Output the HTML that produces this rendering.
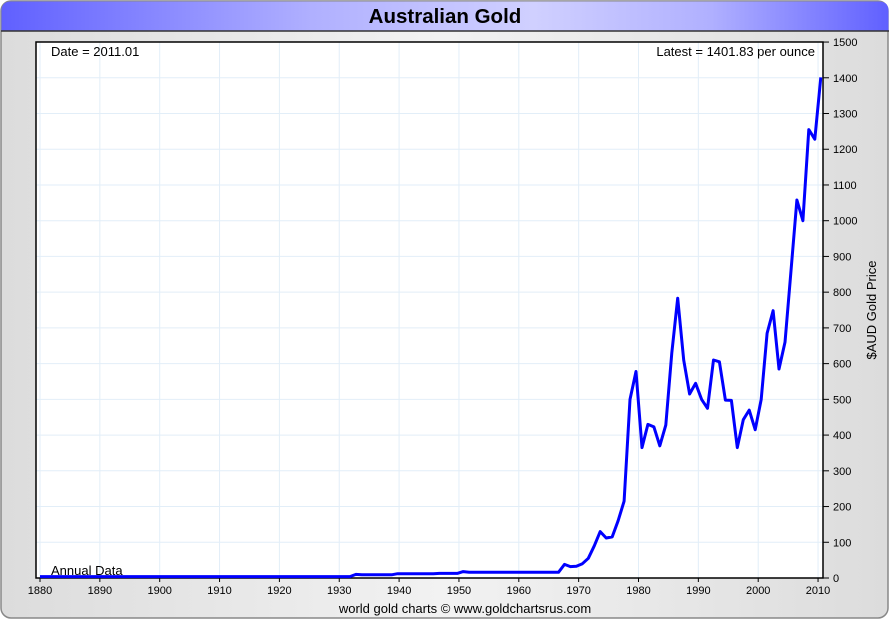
<!DOCTYPE html>
<html><head><meta charset="utf-8"><style>
html,body{margin:0;padding:0;background:#fff;}
body{width:890px;height:620px;overflow:hidden;font-family:"Liberation Sans",sans-serif;}
</style></head><body>
<svg id="s" width="890" height="620" xmlns="http://www.w3.org/2000/svg" font-family="Liberation Sans, sans-serif">
<defs>
<linearGradient id="hd" x1="0" x2="1" y1="0" y2="0">
<stop offset="0" stop-color="#6060ff"/><stop offset="0.35" stop-color="#b0b0ff"/><stop offset="0.6" stop-color="#d0d0ff"/><stop offset="0.8" stop-color="#b0b0ff"/><stop offset="1" stop-color="#6060ff"/>
</linearGradient>
<linearGradient id="bg" x1="0" x2="1" y1="0" y2="0">
<stop offset="0" stop-color="#dcdcdc"/><stop offset="0.5" stop-color="#f2f2f2"/><stop offset="1" stop-color="#dcdcdc"/>
</linearGradient>
</defs>
<rect x="1" y="1" width="887" height="617" rx="10" fill="url(#bg)" stroke="#888" stroke-width="1.5"/>
<path d="M1.5,31 L1.5,11 Q1.5,1.5 11,1.5 L879,1.5 Q888.5,1.5 888.5,11 L888.5,31 Z" fill="url(#hd)"/>
<line x1="1" y1="31" x2="889" y2="31" stroke="#333" stroke-width="1.5"/>
<text x="445" y="23" text-anchor="middle" font-size="20.5" font-weight="bold" fill="#000">Australian Gold</text>
<rect x="36" y="42" width="787" height="536" fill="#fff"/>
<g id="grid"></g>
<rect x="36" y="42" width="787" height="536" fill="none" stroke="#000" stroke-width="1.5"/>
<g id="ax" font-size="11" fill="#000"></g>
<text x="51" y="56" font-size="13">Date = 2011.01</text>
<text x="815" y="56" font-size="13" text-anchor="end">Latest = 1401.83 per ounce</text>
<text x="51" y="575" font-size="13">Annual Data</text>
<text x="876" y="310" font-size="13" text-anchor="middle" transform="rotate(-90 876 310)">$AUD Gold Price</text>
<text x="465" y="613" font-size="13" text-anchor="middle">world gold charts © www.goldchartsrus.com</text>
<polyline id="ln" fill="none" stroke="#0000ff" stroke-width="3" stroke-linejoin="round"/>
</svg>
<script>
var NS="http://www.w3.org/2000/svg";
function X(y){return 40+(y-1880)*5.985;}
function XD(y){return 40+(y-1880)*5.96;}
function Y(v){return 578-v*0.3573;}
function el(t,a,p,txt){var e=document.createElementNS(NS,t);for(var k in a)e.setAttribute(k,a[k]);if(txt)e.textContent=txt;p.appendChild(e);return e;}
var g=document.getElementById('grid'),ax=document.getElementById('ax');
for(var y=1880;y<=2010;y+=10){var x=X(y);el('line',{x1:x,y1:42,x2:x,y2:578,stroke:'#e2eef8','stroke-width':1},g);
el('line',{x1:x,y1:578,x2:x,y2:582,stroke:'#000'},ax);el('text',{x:x,y:594,'text-anchor':'middle'},ax,''+y);}
for(var v=0;v<=1500;v+=100){var yy=Y(v);el('line',{x1:36,y1:yy,x2:823,y2:yy,stroke:'#e2eef8','stroke-width':1},g);
el('line',{x1:823,y1:yy,x2:829,y2:yy,stroke:'#000'},ax);el('text',{x:833,y:yy+4},ax,''+v);}
var d={1932:4,1933:10,1934:9,1939:9,1940:12,1946:12,1947:13,1950:13,1951:18,1952:16,1960:16,1967:16,1968:38,1969:32,1970:33,1971:40,1972:55,1973:90,1974:130,1975:112,1976:115,1977:160,1978:215,1979:500,1980:578,1981:365,1982:430,1983:423,1984:370,1985:428,1986:630,1987:783,1988:610,1989:515,1990:545,1991:500,1992:475,1993:610,1994:605,1995:498,1996:497,1997:365,1998:443,1999:470,2000:415,2001:500,2002:685,2003:748,2004:585,2005:660,2006:860,2007:1058,2008:1000,2009:1255,2010:1228,2011:1401};
var pts=[XD(1880)+','+Y(4)];
Object.keys(d).forEach(function(k){pts.push(XD(+k).toFixed(1)+','+Y(d[k]).toFixed(1));});
document.getElementById('ln').setAttribute('points',pts.join(' '));
</script>
</body></html>
